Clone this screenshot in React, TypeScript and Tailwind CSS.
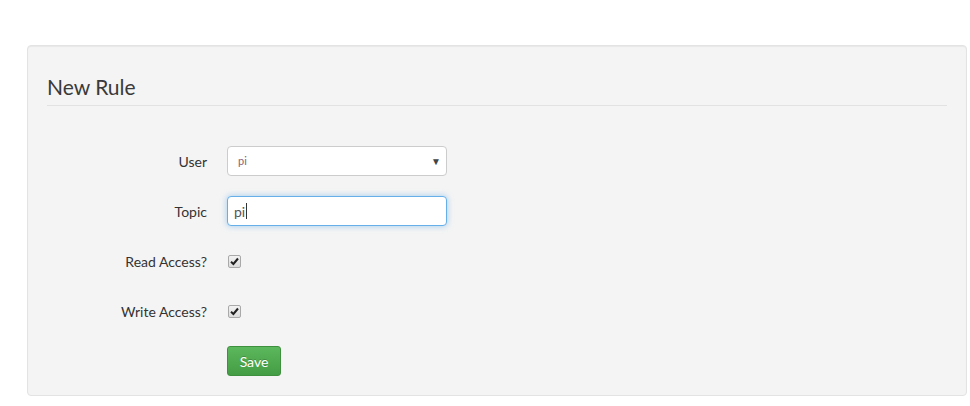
export default function App() {
  return (
    <div className="min-h-screen w-full bg-white font-['Lato','Open_Sans',sans-serif] text-[14px] text-[#333]">
      <div className="pt-[45px] pl-[27px] pr-[3px]">
        <div className="h-[351px] rounded-[4px] border border-[#e3e3e3] bg-[#f4f4f4] px-[19px] pt-[23px] shadow-[inset_0_1px_1px_rgba(0,0,0,0.05)]">
          {/* heading */}
          <h3 className="h-[37px] border-b border-[#e2e2e2] text-[21px] font-normal leading-[36px] text-[#3a3a3a]">New Rule</h3>

          <div className="mt-[40px] flex flex-col gap-[20px]">
            <div className="flex items-center gap-[20px]">
              <label className="w-[160px] text-right">User</label>
              <div className="flex h-[30px] w-[220px] items-center justify-between rounded-[4px] border border-[#ccc] bg-white pl-[10px] pr-[5px]">
                <span className="text-[11px] text-[#8a5f78]">pi</span>
                <span className="text-[10px] leading-none text-[#444]">▼</span>
              </div>
            </div>

            <div className="flex items-center gap-[20px]">
              <label className="w-[160px] text-right">Topic</label>
              <div className="flex h-[30px] w-[220px] items-center rounded-[4px] border border-[#66afe9] bg-white pl-[6px] shadow-[0_0_6px_rgba(102,175,233,0.6)]">
                <span className="text-[14px] text-[#555]">pi</span>
                <span className="ml-[1px] h-[16px] w-px bg-[#333]" />
              </div>
            </div>

            <div className="flex h-[30px] items-center gap-[20px]">
              <label className="w-[160px] text-right">Read Access?</label>
              <Check />
            </div>

            <div className="flex h-[30px] items-center gap-[20px]">
              <label className="w-[160px] text-right">Write Access?</label>
              <Check />
            </div>

            <div className="flex items-center gap-[20px]">
              <div className="w-[160px]" />
              <button className="h-[30px] w-[54px] rounded-[3px] border border-[#3e8f3e] bg-gradient-to-b from-[#5cb85c] to-[#449d44] text-[14px] text-white [text-shadow:0_-1px_0_rgba(0,0,0,0.2)]">
                Save
              </button>
            </div>
          </div>
        </div>
      </div>
    </div>
  )
}

function Check() {
  return (
    <span className="ml-[1px] flex h-[13px] w-[13px] items-center justify-center rounded-[2px] border border-[#a9a9a9] bg-gradient-to-b from-[#f2f2f2] to-[#dcdcdc]">
      <svg width="9" height="9" viewBox="0 0 9 9">
        <path d="M1 4.8 L3.4 7 L8 1.5" fill="none" stroke="#222" strokeWidth="2" />
      </svg>
    </span>
  )
}
